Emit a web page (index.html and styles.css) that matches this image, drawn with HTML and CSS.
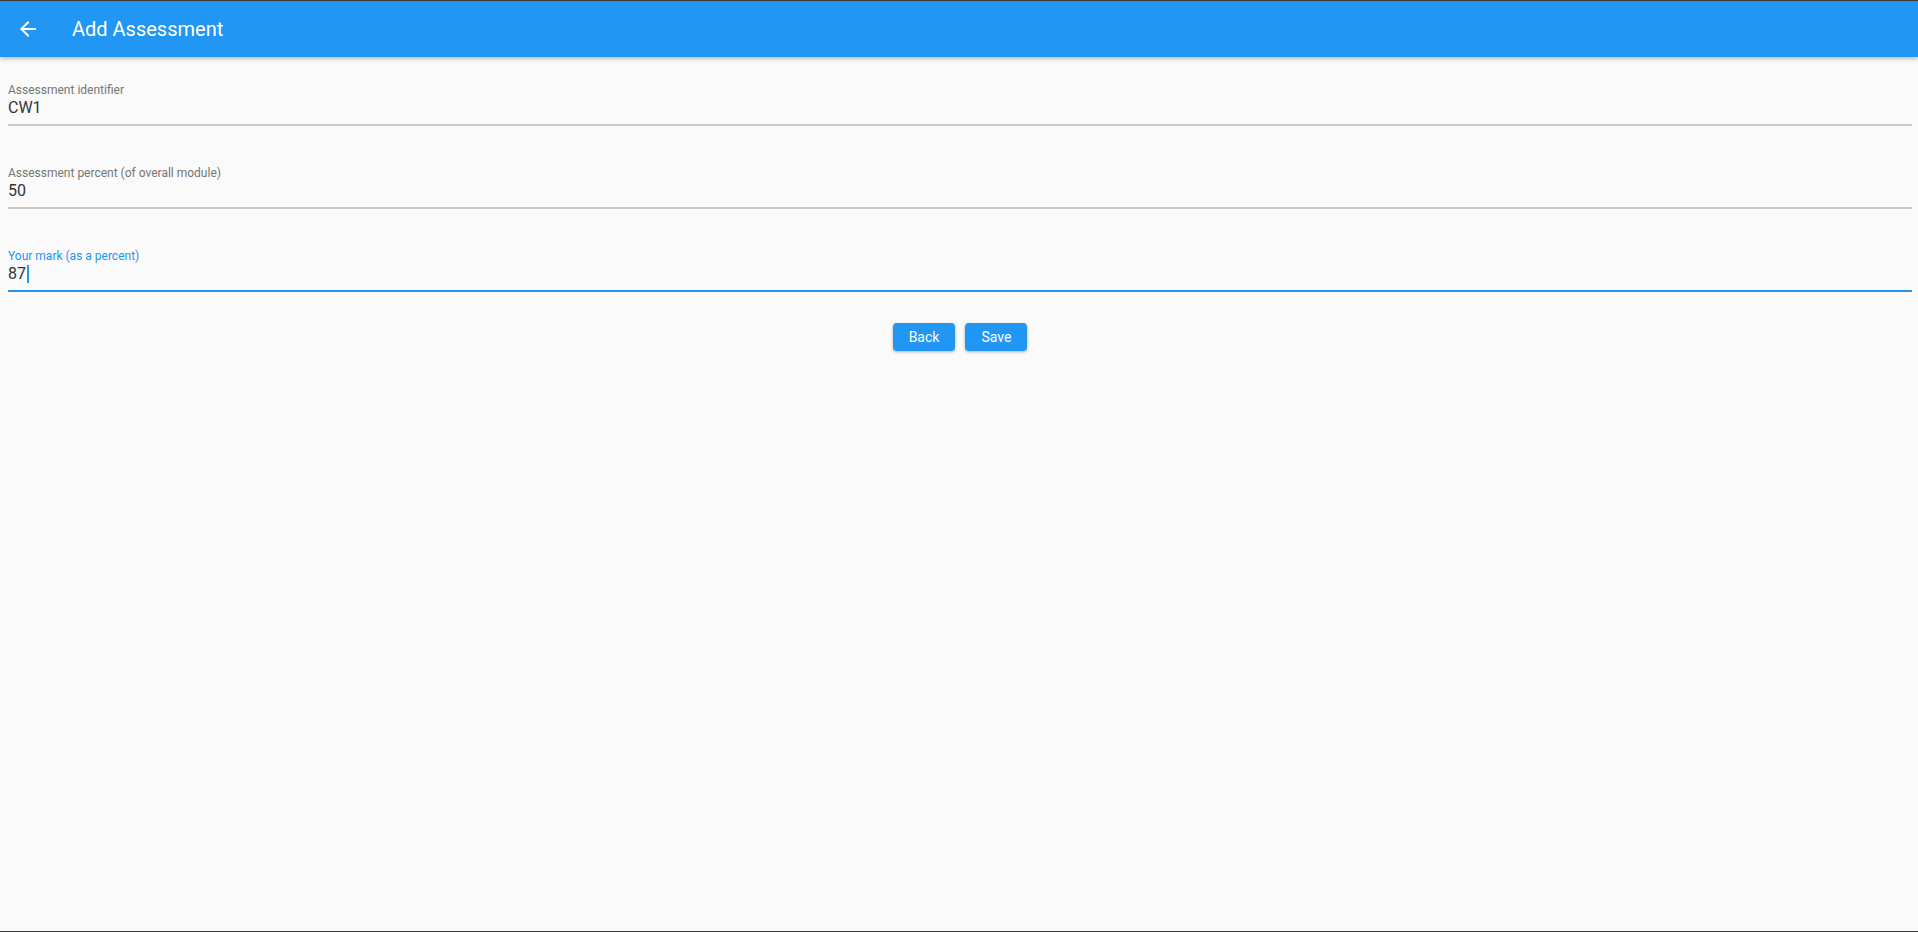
FILE: index.html
```html
<!DOCTYPE html>
<html lang="en">
<head>
  <meta charset="UTF-8">
  <meta name="viewport" content="width=device-width, initial-scale=1.0">
  <title>Add Assessment</title>
  <link rel="stylesheet" href="styles.css">
</head>
<body>
  <header class="app-bar">
    <button class="back-btn" aria-label="Back">
      <svg viewBox="0 0 24 24" width="24" height="24"><path fill="#fff" d="M20 11H7.83l5.59-5.59L12 4l-8 8 8 8 1.41-1.41L7.83 13H20v-2z"/></svg>
    </button>
    <h1>Add Assessment</h1>
  </header>

  <main class="form">
    <div class="field">
      <div class="field-label">Assessment identifier</div>
      <div class="field-value">CW1</div>
    </div>
    <div class="field">
      <div class="field-label">Assessment percent (of overall module)</div>
      <div class="field-value">50</div>
    </div>
    <div class="field focused">
      <div class="field-label">Your mark (as a percent)</div>
      <div class="field-value">87<span class="caret"></span></div>
    </div>

    <div class="actions">
      <button class="btn">Back</button>
      <button class="btn">Save</button>
    </div>
  </main>
</body>
</html>
```

FILE: styles.css
```css
* {
  margin: 0;
  padding: 0;
  box-sizing: border-box;
  font-family: Roboto, 'Noto Sans', sans-serif;
}

body {
  min-height: 100vh;
  background: #fafafa;
  border-top: 1px solid #3a3a3a;
  border-bottom: 1px solid #3a3a3a;
}

.app-bar {
  position: relative;
  z-index: 1;
  display: flex;
  align-items: center;
  height: 56px;
  padding-left: 16px;
  background: #2196f3;
  box-shadow: 0 2px 4px rgba(0, 0, 0, 0.25);
}

.back-btn {
  display: flex;
  width: 24px;
  height: 24px;
  background: none;
  border: none;
}

.app-bar h1 {
  margin-left: 32px;
  font-size: 20px;
  font-weight: 400;
  color: #fff;
}

.form {
  display: flex;
  flex-direction: column;
  gap: 40px;
  padding: 26px 6px 0 8px;
}

.field {
  border-bottom: 2px solid #c8c8c8;
  padding-bottom: 7px;
}

.field-label {
  font-size: 12px;
  line-height: 15px;
  color: #757575;
}

.field-value {
  display: flex;
  align-items: center;
  font-size: 16px;
  line-height: 19px;
  color: #333;
}

.field.focused {
  border-bottom-color: #2196f3;
}

.field.focused .field-label {
  color: #2196f3;
}

.caret {
  display: inline-block;
  width: 2px;
  height: 18px;
  margin-left: 1px;
  background: #2196f3;
}

.actions {
  display: flex;
  justify-content: center;
  gap: 10px;
  margin-top: -9px;
}

.btn {
  height: 28px;
  padding: 0 16px;
  background: #2196f3;
  border: none;
  border-radius: 4px;
  color: #fff;
  font-size: 14px;
  font-weight: 400;
  box-shadow: 0 1px 3px rgba(0, 0, 0, 0.3);
  cursor: pointer;
}
```
